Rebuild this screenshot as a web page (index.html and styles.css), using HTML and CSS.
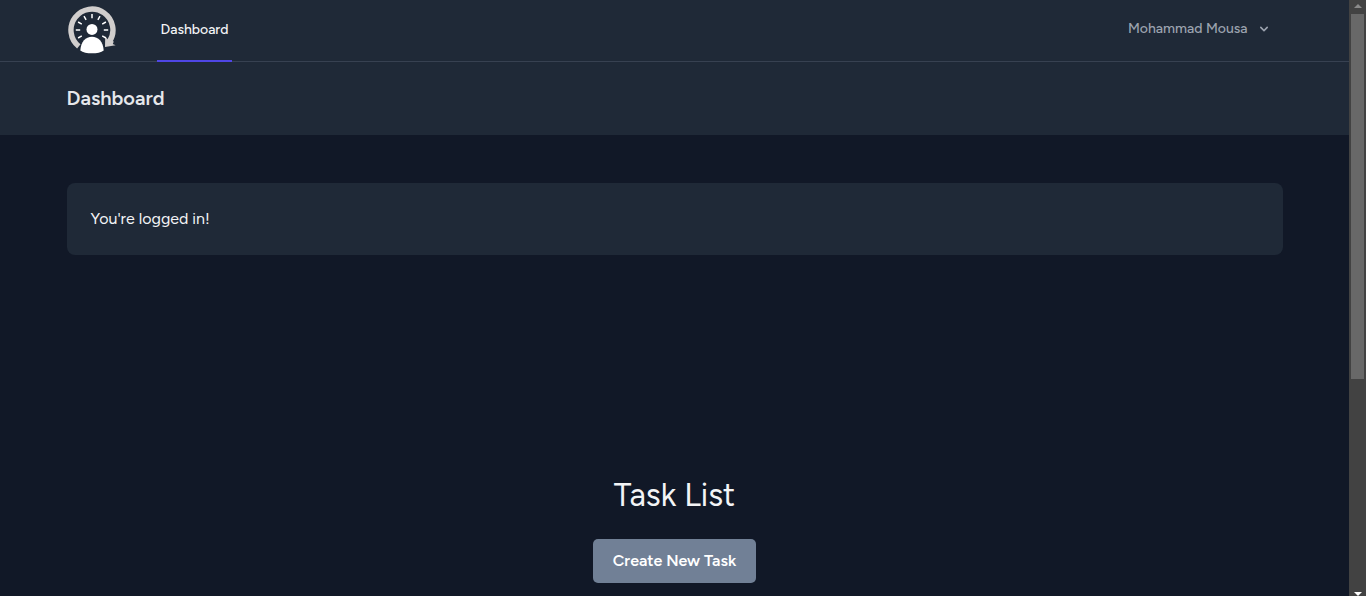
FILE: index.html
```html
<!DOCTYPE html>
<html lang="en">
<head>
<meta charset="utf-8">
<meta name="viewport" content="width=device-width, initial-scale=1">
<title>Dashboard</title>
<link rel="stylesheet" href="styles.css">
</head>
<body>
<div class="page">
  <nav class="nav">
    <div class="container nav-row">
      <a class="logo" href="#" aria-label="Home">
        <svg width="50" height="49" viewBox="0 0 50 49" aria-hidden="true">
          <path d="M11.800 40.400A21 21 0 1 1 42.500 35.600" fill="none" stroke="#d1cecd" stroke-width="5.400"/>
          <path d="M38.200 30.500L41 33.500L46.800 35.500L45.800 38L48.600 39.300L38 41Z" fill="#d1cecd"/>
          <g stroke="#fff" stroke-width="1.500">
            <path d="M25 8v4.200M17 10.100l2.100 3.700M33 10.100l-2.100 3.700M11.100 16l3.700 2.100M38.900 16l-3.700 2.100M8.800 24h4.400M41.200 24h-4.400M11.100 32l3.700-2.100M38.900 32l-3.700-2.100"/>
          </g>
          <circle cx="25" cy="23.400" r="5.500" fill="#fff"/>
          <path d="M13.300 44.500C14 35.500 18.500 30.700 25 30.700S36 35.500 36.700 44.500C32 48.300 18 48.300 13.300 44.500Z" fill="#fff"/>
        </svg>
      </a>
      <a class="nav-link" href="#" aria-current="page">Dashboard</a>
      <button class="user" type="button">Mohammad Mousa
        <svg class="chevron" width="16" height="16" viewBox="0 0 20 20" fill="currentColor" aria-hidden="true"><path fill-rule="evenodd" d="M5.293 7.293a1 1 0 011.414 0L10 10.586l3.293-3.293a1 1 0 111.414 1.414l-4 4a1 1 0 01-1.414 0l-4-4a1 1 0 010-1.414z"/></svg>
      </button>
    </div>
  </nav>
  <header class="header">
    <div class="container"><h1 class="title">Dashboard</h1></div>
  </header>
  <main>
    <div class="container welcome"><p class="card">You're logged in!</p></div>
    <section class="tasks">
      <h2 class="tasks-title">Task List</h2>
      <button class="create" type="button">Create New Task</button>
    </section>
  </main>
</div>
<div class="scrollbar" aria-hidden="true">
  <svg class="arrow arrow-up" width="8" height="4" viewBox="0 0 8 4"><path d="M4 0L8 4H0Z"/></svg>
  <div class="thumb"></div>
  <svg class="arrow arrow-down" width="8" height="4" viewBox="0 0 8 4"><path d="M0 0H8L4 4Z"/></svg>
</div>
</body>
</html>
```
FILE: styles.css
```css
*, *::before, *::after { box-sizing: border-box; }
body {
  margin: 0;
  display: flex;
  height: 100vh;
  overflow: hidden;
  background: #111827;
  color: #f3f4f6;
  font: 400 16px/24px Figtree, Roboto, sans-serif;
}
h1, h2, p { margin: 0; }
button { font: inherit; border: 0; cursor: pointer; }
a { color: inherit; text-decoration: none; }
.page { flex: 1; min-width: 0; overflow: hidden; }
.container { max-width: 1280px; margin: 0 auto; padding: 0 32px; }
.nav { background: #1f2937; border-bottom: 1px solid #374151; }
.nav-row { display: flex; height: 61px; }
.logo { display: flex; align-items: center; }
.nav-link {
  display: flex;
  align-items: center;
  margin: 0 0 -1px 40px;
  padding: 0 4px;
  border-bottom: 2px solid #4f46e5;
  font-size: 14px;
  font-weight: 500;
}
.user {
  display: flex;
  align-items: center;
  gap: 8px;
  margin-left: auto;
  padding: 0 11px 4px;
  background: none;
  color: #9ca3af;
  font-size: 14px;
  font-weight: 500;
}
.header { background: #1f2937; padding: 24px 0; }
.title { color: #e5e7eb; font-size: 20px; line-height: 25px; font-weight: 600; }
.welcome { padding-top: 48px; padding-bottom: 48px; }
.card { padding: 24px; border-radius: 8px; background: #1f2937; }
.tasks {
  display: flex;
  flex-direction: column;
  align-items: center;
  gap: 24px;
  padding-top: 172px;
}
.tasks-title { font-size: 32px; line-height: 40px; font-weight: 400; }
.create {
  padding: 10px 20px;
  border-radius: 5px;
  background: #718096;
  color: #fff;
  font-weight: 600;
}
.scrollbar {
  display: flex;
  flex-direction: column;
  align-items: center;
  width: 17px;
  background: #424242;
}
.arrow { flex: none; fill: #8a8a8a; }
.arrow-up { margin: 4px 0 6px; }
.thumb { width: 13px; height: 61.3%; flex: none; background: #686868; }
.arrow-down { margin-top: auto; fill: #fff; }
```
